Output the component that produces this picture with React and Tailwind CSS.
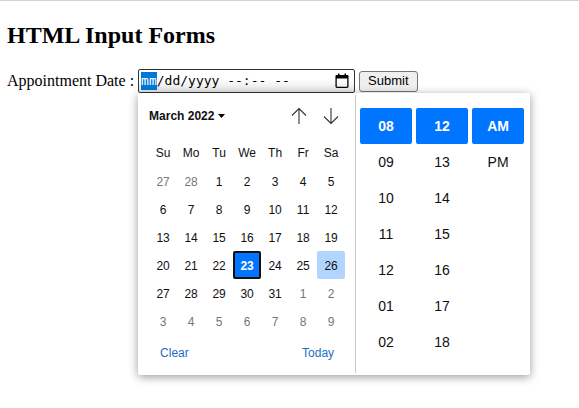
import { useEffect, useRef, useState } from "react";

const WEEKDAYS = ["Su", "Mo", "Tu", "We", "Th", "Fr", "Sa"];

const WEEKS = [
  [27, 28, 1, 2, 3, 4, 5],
  [6, 7, 8, 9, 10, 11, 12],
  [13, 14, 15, 16, 17, 18, 19],
  [20, 21, 22, 23, 24, 25, 26],
  [27, 28, 29, 30, 31, 1, 2],
  [3, 4, 5, 6, 7, 8, 9],
];

const HOURS = ["08", "09", "10", "11", "12", "01", "02"];
const MINUTES = ["12", "13", "14", "15", "16", "17", "18"];
const PERIODS = ["AM", "PM"];

const TODAY = 26;

const isOutside = (week, day) =>
  (week === 0 && day > 20) || (week >= 4 && day < 20);

const CalendarIcon = () => (
  <svg width="14" height="16" viewBox="0 0 14 16" aria-hidden="true">
    <path d="M1 2h12v3.5H1z" fill="#000" />
    <path d="M3 0.5h1.5v2H3zM9.5 0.5H11v2H9.5z" fill="#000" />
    <rect x="1.1" y="2.6" width="11.8" height="11.8" rx="0.8" fill="none" stroke="#000" strokeWidth="1.3" />
  </svg>
);

const ArrowIcon = ({ down }) => (
  <svg
    width="16"
    height="18"
    viewBox="0 0 16 18"
    fill="none"
    stroke="#333"
    strokeWidth="1.1"
    className={down ? "rotate-180" : ""}
    aria-hidden="true"
  >
    <path d="M8 17V1.5M1 8.5l7-7 7 7" />
  </svg>
);

const Calendar = ({ selected, onSelect }) => (
  <div className="pl-[11px] pr-2.5">
    <div className="flex h-[46px] items-center justify-between">
      <button type="button" className="flex items-center gap-1 text-xs font-bold">
        March 2022
        <svg width="7" height="4" viewBox="0 0 7 4" aria-hidden="true">
          <path d="M0 0h7L3.5 4z" fill="#000" />
        </svg>
      </button>
      <div className="flex gap-4 pr-1.5">
        <button type="button" aria-label="Previous month">
          <ArrowIcon />
        </button>
        <button type="button" aria-label="Next month">
          <ArrowIcon down />
        </button>
      </div>
    </div>

    <table className="table-fixed border-collapse text-center text-xs">
      <thead>
        <tr>
          {WEEKDAYS.map((day) => (
            <th key={day} scope="col" className="size-7 p-0 font-normal">
              {day}
            </th>
          ))}
        </tr>
      </thead>
      <tbody>
        {WEEKS.map((days, week) => (
          <tr key={week}>
            {days.map((day) => {
              const outside = isOutside(week, day);
              let look = "";
              if (outside) look = "text-[#767676]";
              else if (day === selected) look = "border-2 border-[#101010] bg-[#0075ff] font-bold text-white";
              else if (day === TODAY) look = "bg-[#b2d5ff]";
              return (
                <td key={day} className="size-7 p-0">
                  <button
                    type="button"
                    onClick={() => !outside && onSelect(day)}
                    className={`flex size-7 items-center justify-center rounded-xs pt-0.5 ${look}`}
                  >
                    {day}
                  </button>
                </td>
              );
            })}
          </tr>
        ))}
      </tbody>
    </table>

    <div className="flex h-9 items-center justify-between px-[11px] text-xs text-[#1a6fc4]">
      <button type="button">Clear</button>
      <button type="button">Today</button>
    </div>
  </div>
);

const TimeColumn = ({ label, options }) => {
  const [value, setValue] = useState(options[0]);

  return (
    <div role="group" aria-label={label} className="flex w-13 flex-col">
      {options.map((option) => (
        <button
          key={option}
          type="button"
          onClick={() => setValue(option)}
          className={`h-9 rounded-xs text-sm ${
            option === value ? "bg-[#0075ff] font-bold text-white" : ""
          }`}
        >
          {option}
        </button>
      ))}
    </div>
  );
};

const App = () => {
  const inputRef = useRef(null);
  const [selected, setSelected] = useState(23);

  // the month part of the field is active when the form opens
  useEffect(() => {
    inputRef.current.focus();
    inputRef.current.setSelectionRange(0, 2);
  }, []);

  return (
    <main className="min-h-screen border-t border-[#d4d4d4] bg-white px-[7px] pt-[18px] font-['Liberation_Serif',serif] text-black">
      <h2 className="text-2xl font-bold">HTML Input Forms</h2>

      <form className="mt-[18px] flex items-center gap-1" onSubmit={(e) => e.preventDefault()}>
        <label htmlFor="appointment" className="whitespace-nowrap text-base">
          Appointment Date :
        </label>

        <div className="relative">
          <div className="flex h-6 items-center justify-between rounded-xs border border-[#333] bg-linear-to-b from-white from-40% to-[#e6e6e6] pl-0.5 pr-[5px]">
            <input
              ref={inputRef}
              id="appointment"
              type="text"
              defaultValue="mm/dd/yyyy --:-- --"
              className="w-[194px] bg-transparent font-['DejaVu_Sans_Mono',monospace] text-[13px] leading-[18px] caret-transparent outline-none selection:bg-[#0078d7] selection:text-white"
            />
            <button type="button" aria-label="Show date picker">
              <CalendarIcon />
            </button>
          </div>

          <div className="absolute left-0 top-full flex rounded-xs bg-white font-['Liberation_Sans',sans-serif] text-[#101010] shadow-[0_2px_10px_rgba(0,0,0,0.4)]">
            <Calendar selected={selected} onSelect={setSelected} />
            <div className="my-0.5 flex gap-1 border-l border-[#c8c8c8] pb-[13px] pl-1 pr-1.5 pt-[13px]">
              <TimeColumn label="Hours" options={HOURS} />
              <TimeColumn label="Minutes" options={MINUTES} />
              <TimeColumn label="AM/PM" options={PERIODS} />
            </div>
          </div>
        </div>

        <button
          type="submit"
          className="h-[21px] rounded-[3px] border border-[#767676] bg-[#efefef] px-2 font-['Liberation_Sans',sans-serif] text-[13px] leading-4"
        >
          Submit
        </button>
      </form>
    </main>
  );
};

export default App;
